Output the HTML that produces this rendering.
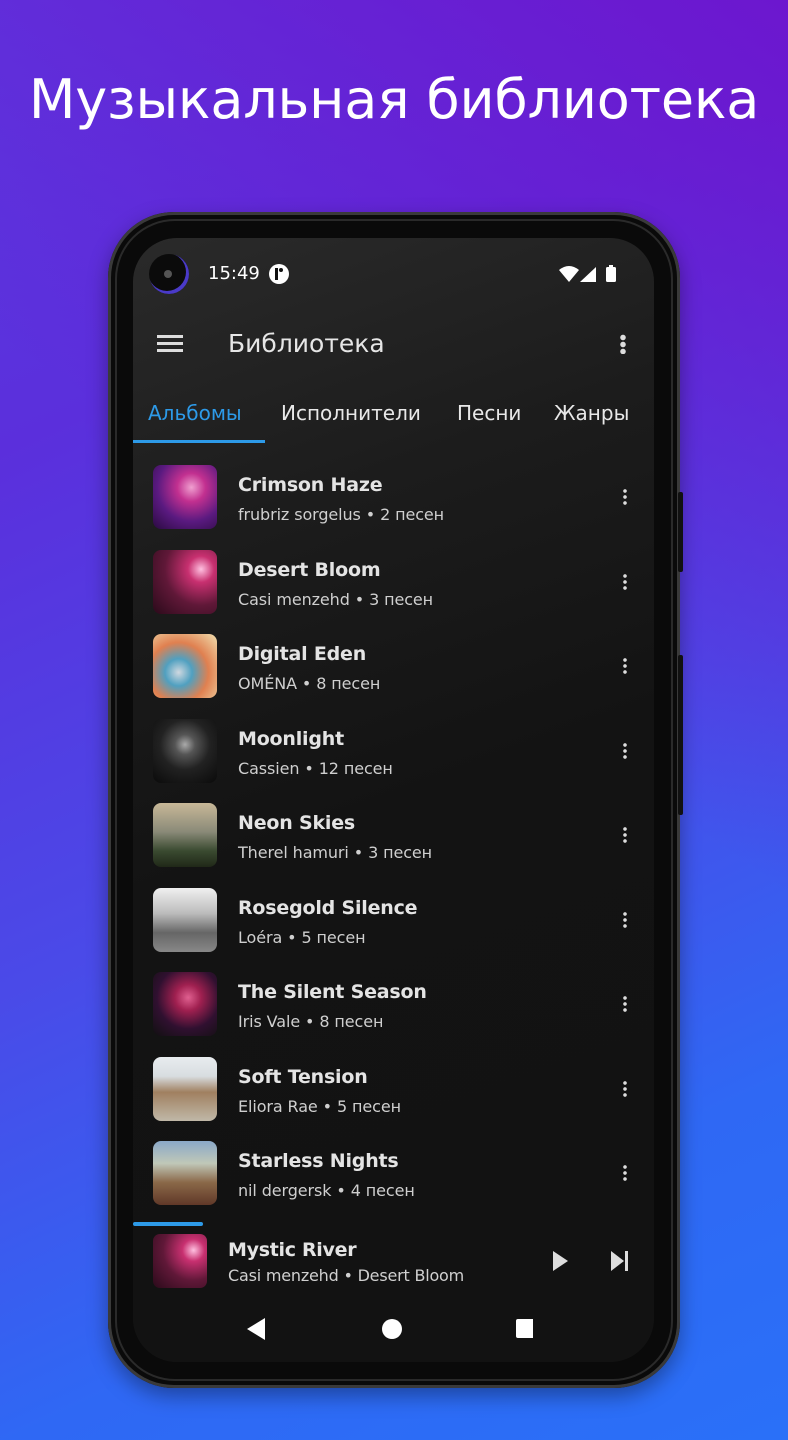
<!DOCTYPE html>
<html><head><meta charset="utf-8"><style>
*{margin:0;padding:0;box-sizing:border-box}
body{width:788px;height:1440px;overflow:hidden;position:relative;font-family:"DejaVu Sans","Liberation Sans",sans-serif;background:linear-gradient(155deg,#5a3ae0 0%,#5b2fdc 25%,#4a4ae8 55%,#2f68f4 80%,#2a70f8 100%);}
.bgtop{position:absolute;inset:0;background:linear-gradient(215deg,rgba(110,20,205,0.9) 0%,rgba(110,20,205,0) 45%);}
h1{position:absolute;top:68px;left:0;width:788px;text-align:center;color:#fff;font-weight:normal;font-size:54px;letter-spacing:-0.2px;font-family:"DejaVu Sans","Liberation Sans",sans-serif;}
.phone{position:absolute;left:108px;top:212px;width:572px;height:1176px;border-radius:66px;background:#0a0a0a;box-shadow:0 0 0 3px #3a3a3a inset,0 8px 20px rgba(0,0,0,.35);}
.phone:after{content:"";position:absolute;inset:7px;border-radius:60px;border:2px solid #2a2a2a;}
.btn{position:absolute;left:678px;width:5px;background:#111;border-radius:2px}
.screen{position:absolute;left:133px;top:238px;width:521px;height:1124px;border-radius:44px;overflow:hidden;background:#121212;}
.glow{position:absolute;left:0;top:0;width:521px;height:1124px;background:linear-gradient(160deg,#2a2a2a 0%,#1c1c1c 25%,#131313 50%,#121212 100%);}
.t{position:absolute;color:#e8e8e8;white-space:nowrap}
.cam{position:absolute;left:16px;top:16px;width:40px;height:40px;border-radius:50%;background:#0b0b0b;box-shadow:-2px -2px 0 1px #4a3ac8 inset;}
.cam:after{content:"";position:absolute;left:15px;top:16px;width:8px;height:8px;border-radius:50%;background:#555;}
.item{position:absolute;left:20px;width:480px;height:64px}
.th{position:absolute;left:0;top:0;width:64px;height:64px;border-radius:8px}
.ti{position:absolute;left:85px;top:9px;font-size:19px;font-weight:bold;color:#e4e4e4;letter-spacing:-0.2px}
.su{position:absolute;left:85px;top:40px;font-size:16px;color:#cfcfcf;letter-spacing:-0.1px}
.dots{position:absolute;left:470px;top:23px;width:4px;height:18px;background:radial-gradient(circle,#ddd 1.6px,transparent 2px) 0 0/4px 6px repeat-y}
</style></head><body>
<div class="bgtop"></div>
<h1>Музыкальная библиотека</h1>
<div class="phone"></div>
<div class="btn" style="top:492px;height:80px"></div>
<div class="btn" style="top:655px;height:160px"></div>
<div class="screen">
<div class="glow"></div>
<div class="cam"></div>
<div class="t" style="left:75px;top:25px;font-size:18px;color:#fff">15:49</div>
<div style="position:absolute;left:136px;top:26px;width:20px;height:20px;border-radius:50%;background:#fff"><div style="position:absolute;left:6px;top:4px;width:3px;height:12px;background:#111"></div><div style="position:absolute;left:10px;top:4px;width:4px;height:4px;border-radius:50%;background:#111"></div></div>
<svg style="position:absolute;left:426px;top:26px" width="64" height="20"><path d="M0 6 Q10 -2 20 6 L10 18Z" fill="#fff"/><path d="M21 18 L37 3 L37 18Z" fill="#fff"/><rect x="47" y="3" width="10" height="15" rx="1.5" fill="#fff"/><rect x="50" y="1" width="4" height="3" fill="#fff"/></svg>
<svg style="position:absolute;left:24px;top:97px" width="26" height="20"><rect y="0" width="26" height="3" fill="#ddd"/><rect y="7" width="26" height="3" fill="#ddd"/><rect y="14" width="26" height="3" fill="#ddd"/></svg>
<div class="t" style="left:95px;top:91px;font-size:25px;color:#e6e6e6">Библиотека</div>
<div class="dots" style="left:487px;top:96px;height:20px;width:6px;background:radial-gradient(circle,#ddd 2.5px,transparent 3px) 0 0/6px 7px repeat-y"></div>
<div class="t" style="left:15px;top:163px;font-size:20px;color:#2d9ae8">Альбомы</div>
<div class="t" style="left:148px;top:163px;font-size:20px">Исполнители</div>
<div class="t" style="left:324px;top:163px;font-size:20px">Песни</div>
<div class="t" style="left:421px;top:163px;font-size:20px">Жанры</div>
<div style="position:absolute;left:0;top:202px;width:132px;height:3px;background:#2d9ae8"></div>

<div class="item" style="top:227px"><div class="th" style="background:radial-gradient(circle at 60% 35%,#f0a0d0 0,#c23090 25%,#5a1a80 60%,#2a0a40 100%)"></div><div class="ti">Crimson Haze</div><div class="su">frubriz sorgelus • 2 песен</div><div class="dots"></div></div>
<div class="item" style="top:312px"><div class="th" style="background:radial-gradient(circle at 75% 30%,#ffc0e0 0,#c83070 20%,#601838 55%,#2a0a1a 100%)"></div><div class="ti">Desert Bloom</div><div class="su">Casi menzehd • 3 песен</div><div class="dots"></div></div>
<div class="item" style="top:396px"><div class="th" style="background:radial-gradient(circle at 40% 60%,#cfd8e0 0,#50a0c0 25%,#e08050 55%,#f0e0b0 100%)"></div><div class="ti">Digital Eden</div><div class="su">OMÉNA • 8 песен</div><div class="dots"></div></div>
<div class="item" style="top:481px"><div class="th" style="background:radial-gradient(circle at 50% 40%,#aaa 0,#555 20%,#222 50%,#0a0a0a 100%)"></div><div class="ti">Moonlight</div><div class="su">Cassien • 12 песен</div><div class="dots"></div></div>
<div class="item" style="top:565px"><div class="th" style="background:linear-gradient(180deg,#c8b898 0%,#8a8a78 45%,#3a4a30 75%,#202818 100%)"></div><div class="ti">Neon Skies</div><div class="su">Therel hamuri • 3 песен</div><div class="dots"></div></div>
<div class="item" style="top:650px"><div class="th" style="background:linear-gradient(180deg,#f0f0f0 0%,#bbb 40%,#666 70%,#888 100%)"></div><div class="ti">Rosegold Silence</div><div class="su">Loéra • 5 песен</div><div class="dots"></div></div>
<div class="item" style="top:734px"><div class="th" style="background:radial-gradient(circle at 55% 40%,#e06090 0,#a02050 25%,#301030 60%,#101010 100%)"></div><div class="ti">The Silent Season</div><div class="su">Iris Vale • 8 песен</div><div class="dots"></div></div>
<div class="item" style="top:819px"><div class="th" style="background:linear-gradient(180deg,#e8ecef 0%,#d8dde0 30%,#a08060 55%,#c0b8a8 100%)"></div><div class="ti">Soft Tension</div><div class="su">Eliora Rae • 5 песен</div><div class="dots"></div></div>
<div class="item" style="top:903px"><div class="th" style="background:linear-gradient(180deg,#8aa8c8 0%,#c0c8b8 35%,#8a6848 65%,#603828 100%)"></div><div class="ti">Starless Nights</div><div class="su">nil dergersk • 4 песен</div><div class="dots"></div></div>

<div style="position:absolute;left:0;top:984px;width:70px;height:4px;background:#2d9ae8;border-radius:2px"></div>
<div style="position:absolute;left:20px;top:996px;width:54px;height:54px;border-radius:7px;background:radial-gradient(circle at 75% 30%,#ffc0e0 0,#c83070 20%,#601838 55%,#2a0a1a 100%)"></div>
<div class="t" style="left:95px;top:1001px;font-size:19px;font-weight:bold;color:#e4e4e4;letter-spacing:-0.3px">Mystic River</div>
<div class="t" style="left:95px;top:1028px;font-size:16px;color:#d0d0d0;letter-spacing:-0.2px">Casi menzehd • Desert Bloom</div>
<svg style="position:absolute;left:418px;top:1012px" width="80" height="22"><path d="M2 1 L17 11 L2 21Z" fill="#ddd"/><path d="M60 1 L73 11 L60 21Z" fill="#ddd"/><rect x="74" y="1" width="3" height="20" fill="#ddd"/></svg>
<svg style="position:absolute;left:110px;top:1078px" width="290" height="26"><path d="M22 2 L4 13 L22 24Z" fill="#fff"/><circle cx="149" cy="13" r="10" fill="#fff"/><rect x="273" y="3" width="19" height="19" rx="2" fill="#fff"/></svg>
</div>
</body></html>
